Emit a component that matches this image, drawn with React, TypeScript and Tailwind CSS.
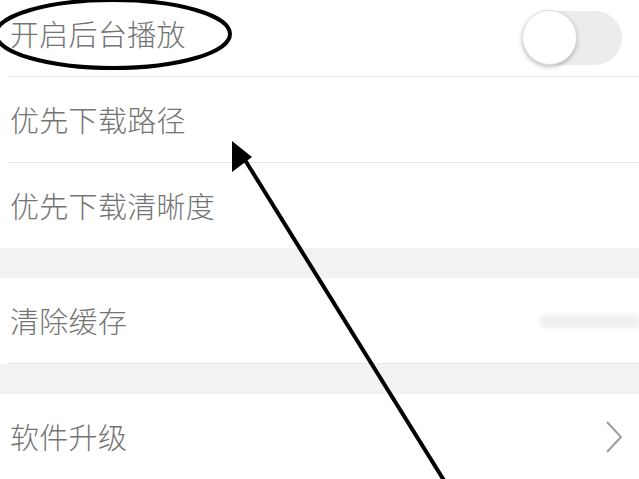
// Settings list with hand-drawn annotation overlay

function Row({ label, children, last, h }: { label: string; children?: React.ReactNode; last?: boolean; h: string }) {
  return (
    <div className={`${h} bg-white pl-[8px] flex`}>
      <div className={`flex-1 flex items-center justify-between ${last ? "" : "border-b border-[#e6e6e6]"}`}>
        <span className="pl-[2px] text-[29px] font-light text-[#747474] leading-none tracking-[0.3px]">{label}</span>
        {children}
      </div>
    </div>
  );
}

function Gap() {
  return <div className="h-[30px] bg-[#f1f2f2]" />;
}

export default function App() {
  return (
    <div
      className="relative w-[639px] h-[479px] overflow-hidden bg-white"
      style={{ fontFamily: '"Noto Sans CJK SC", "Noto Sans", sans-serif' }}
    >
      <div className="flex flex-col -mt-[9px]">
        <Row label="开启后台播放" h="h-[86px]">
          <div className="mr-[17px] mt-[8px] w-[100px] h-[54px] rounded-full bg-[#ececec] flex items-center">
            <div className="w-[55px] h-[55px] rounded-full bg-white shadow-[0_2px_4px_rgba(0,0,0,0.25)] border border-[#dedede]" />
          </div>
        </Row>
        <Row label="优先下载路径" h="h-[86px]" />
        <Row label="优先下载清晰度" h="h-[85px]" last />
        <Gap />
        <Row label="清除缓存" h="h-[86px]">
          <div className="w-[100px] h-[22px] flex items-center">
            <div className="w-full h-[14px] rounded-l-full bg-[#f0f0f0] blur-[2px]" />
          </div>
        </Row>
        <Gap />
        <Row label="软件升级" h="h-[86px]">
          <svg className="mr-[16px]" width="18" height="32" viewBox="0 0 18 32">
            <polyline points="2,1 16,16 2,31" fill="none" stroke="#9c9c9c" strokeWidth="2" />
          </svg>
        </Row>
      </div>

      {/* annotations */}
      <svg className="absolute inset-0 pointer-events-none" width="639" height="479" viewBox="0 0 639 479">
        <ellipse cx="113" cy="34" rx="117" ry="34" fill="none" stroke="#000" strokeWidth="4" />
        <line x1="445" y1="482" x2="240" y2="152" stroke="#000" strokeWidth="4" />
        <polygon points="232,141 232,172 252,157" fill="#000" />
      </svg>
    </div>
  );
}
